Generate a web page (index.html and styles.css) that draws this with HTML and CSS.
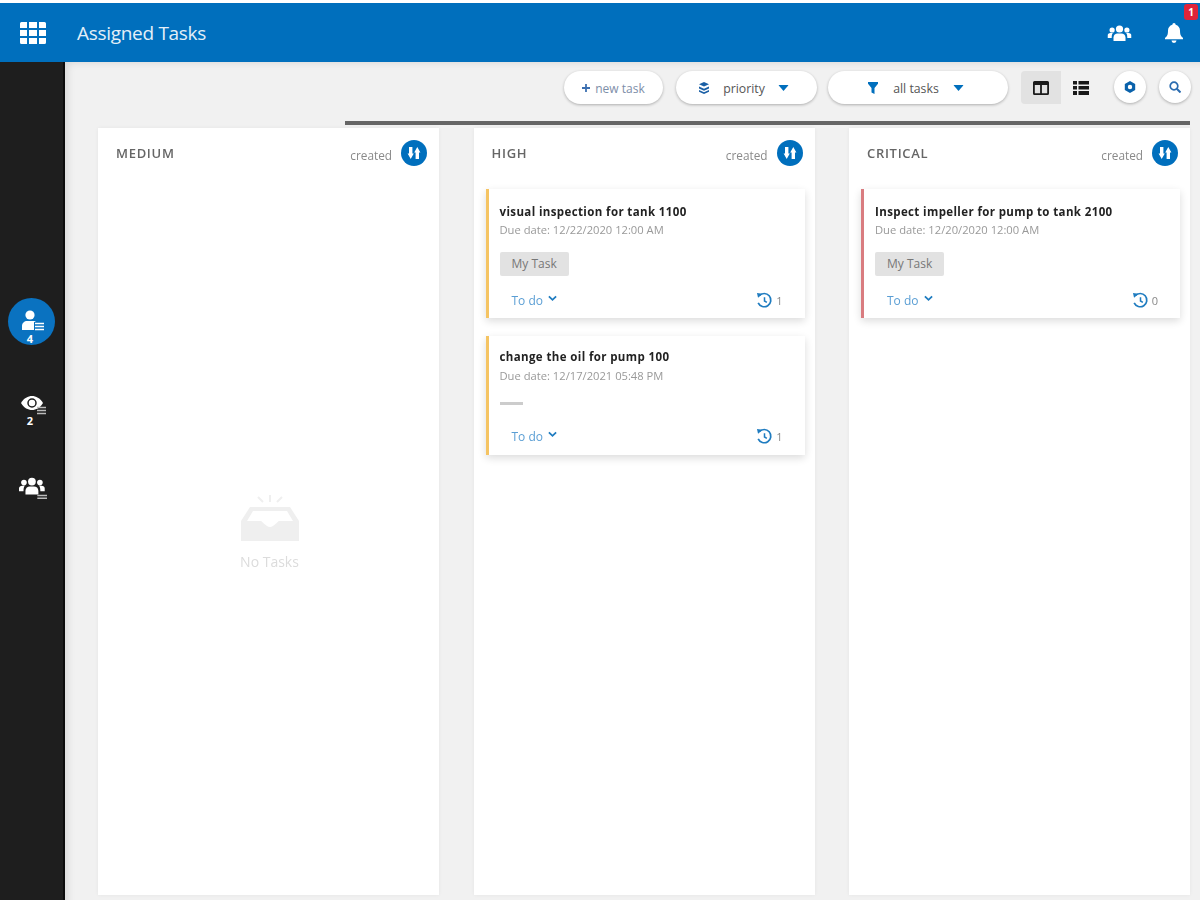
FILE: index.html
```
<!DOCTYPE html>
<html lang="en">
<head>
<meta charset="utf-8">
<title>Assigned Tasks</title>
<link rel="stylesheet" href="styles.css">
</head>
<body>
<svg class="defs" width="0" height="0" aria-hidden="true">
  <defs>
    <symbol id="i-users" viewBox="0 0 24 18">
      <circle cx="12" cy="5" r="3.6"/><circle cx="4.6" cy="6" r="2.6"/><circle cx="19.4" cy="6" r="2.6"/>
      <path d="M6 17v-3.5C6 11 8 9.6 10 9.6h4c2 0 4 1.4 4 3.9V17z"/>
      <path d="M0 14v-2.5C0 10 1.4 9 3 9h2.4C4.6 10 4.2 11.200 4.200 13.500V14z"/>
      <path d="M24 14v-2.500C24 10 22.600 9 21 9h-2.400c.8 1 1.200 2.200 1.200 4.500V14z"/>
    </symbol>
    <symbol id="i-sort" viewBox="0 0 26 26">
      <circle cx="13" cy="13" r="13" fill="#006fbd"/>
      <path fill="#fff" d="M8 7h3.400v6.500h1.400L9.700 19 6.600 13.500H8zM16.300 7l3.100 5.500H18V19h-3.400v-6.500h-1.400z"/>
    </symbol>
    <symbol id="i-history" viewBox="0 0 18 18">
      <path fill="none" stroke="#1f7cc0" stroke-width="1.800" d="M3.400 4A7 7 0 1 1 2.300 11.500"/>
      <path fill="#1f7cc0" d="M1 1l6 .8-4.800 4.400z"/>
      <path fill="none" stroke="#1f7cc0" stroke-width="1.600" d="M9 5.500V9.500l2.500 1.500"/>
    </symbol>
    <symbol id="i-chev" viewBox="0 0 10 7">
      <path fill="none" stroke="#1f7cc0" stroke-width="2" d="M1 1.200l4 3.800 4-3.800"/>
    </symbol>
    <symbol id="i-caret" viewBox="0 0 12 7">
      <path fill="#006fbd" d="M0 0h12L6 7z"/>
    </symbol>
  </defs>
</svg>
<div class="app">
  <header class="topbar">
    <svg class="grid-icon" viewBox="0 0 26 22" aria-hidden="true">
      <path fill="#fff" d="M0 1.500A1.500 1.500 0 0 1 1.500 0H7v6H0zM9 0h8v6H9zM19 0h5.500A1.500 1.500 0 0 1 26 1.500V6h-7zM0 8h7v6H0zM9 8h8v6H9zM19 8h7v6h-7zM0 16h7v6H1.500A1.500 1.500 0 0 1 0 20.500zM9 16h8v6H9zM19 16h7v4.500a1.500 1.500 0 0 1-1.500 1.500H19z"/>
    </svg>
    <h1 class="title">Assigned Tasks</h1>
    <div class="top-actions">
      <svg class="top-users" viewBox="0 0 24 18" aria-hidden="true"><use href="#i-users"/></svg>
      <div class="bell-wrap">
        <svg class="bell" viewBox="0 0 18 20" aria-hidden="true">
          <path fill="#fff" d="M9 0a1.600 1.600 0 0 1 1.600 1.700C13.400 2.400 15 4.800 15 7.500c0 4.500 1 5.800 3 7.500v1.200H0V15c2-1.700 3-3 3-7.500C3 4.800 4.600 2.400 7.400 1.700A1.600 1.600 0 0 1 9 0zM6.500 17.500h5a2.500 2.500 0 0 1-5 0z"/>
        </svg>
        <span class="badge">1</span>
      </div>
    </div>
  </header>
  <div class="body-row">
    <nav class="sidebar">
      <div class="nav-item nav-active">
        <svg class="nav-icon" viewBox="0 0 24 22" aria-hidden="true">
          <circle cx="10" cy="5" r="4.600" fill="#fff"/>
          <path fill="#fff" d="M2 20v-4c0-3 2.500-5 5-5h6c1.500 0 2.500.5 3 1h-2v8z"/>
          <path stroke="#fff" stroke-width="1.500" d="M15 13.500h9M15 16.500h9M15 19.500h9"/>
        </svg>
        <span class="nav-count">4</span>
      </div>
      <div class="nav-item nav-eye">
        <svg class="nav-icon" viewBox="0 0 26 22" aria-hidden="true">
          <path fill="#fff" d="M0 8C3 3 7 1 11 1s8 2 11 7c-3 5-7 7-11 7S3 13 0 8z"/>
          <circle cx="11" cy="8" r="4" fill="none" stroke="#1e1e1e" stroke-width="1.500"/>
          <path stroke="#bbb" stroke-width="1.500" d="M16 12.500h9M16 15.500h9M16 18.500h9"/>
        </svg>
        <span class="nav-count">2</span>
      </div>
      <div class="nav-item nav-team">
        <svg class="nav-icon" viewBox="0 0 26 22" aria-hidden="true">
          <use href="#i-users" width="24" height="18"/>
          <path stroke="#bbb" stroke-width="1.300" d="M17 18h9M17 20.500h9"/>
        </svg>
      </div>
    </nav>
    <main class="main">
      <div class="toolbar">
        <button class="pill pill-new" type="button">
          <svg class="plus" viewBox="0 0 9 9" aria-hidden="true"><path fill="#3b6fb0" d="M3.500 0h2v3.500H9v2H5.500V9h-2V5.500H0v-2h3.500z"/></svg>
          <span>new task</span>
        </button>
        <button class="pill pill-priority" type="button">
          <svg class="pill-icon" viewBox="0 0 12 12" aria-hidden="true"><path fill="#1a5fa5" d="M6 0l5 2.200L6 4.400 1 2.200zM1 4.500l5 2.200 5-2.200v2L6 8.700 1 6.500zM1 8l5 2.200L11 8v1.800L6 12 1 9.800z"/></svg>
          <span>priority</span>
          <svg class="caret" viewBox="0 0 12 7" aria-hidden="true"><use href="#i-caret"/></svg>
        </button>
        <button class="pill pill-all" type="button">
          <svg class="pill-icon" viewBox="0 0 12 12" aria-hidden="true"><path fill="#006fbd" d="M1 0h10v1.800L7.500 6v6l-3-1.500V6L1 1.800z"/></svg>
          <span>all tasks</span>
          <svg class="caret" viewBox="0 0 12 7" aria-hidden="true"><use href="#i-caret"/></svg>
        </button>
        <div class="view-toggle">
          <div class="view-btn view-on">
            <svg class="view-icon" viewBox="0 0 16 14" aria-hidden="true"><path fill="#1a1a1a" d="M1.500 0h13A1.500 1.500 0 0 1 16 1.500v11a1.500 1.500 0 0 1-1.500 1.500h-13A1.500 1.500 0 0 1 0 12.500v-11A1.500 1.500 0 0 1 1.500 0zM1.800 4v8.200h5.300V4zm7.100 0v8.200h5.300V4z" fill-rule="evenodd"/></svg>
          </div>
          <div class="view-btn">
            <svg class="view-icon" viewBox="0 0 16 14" aria-hidden="true"><path fill="#1a1a1a" d="M0 0h4v3.500H0zM5.500 0H16v3.500H5.500zM0 5h4v3.500H0zM5.500 5H16v3.500H5.500zM0 10h4v4H0zM5.500 10H16v4H5.500z"/></svg>
          </div>
        </div>
        <button class="round" type="button">
          <svg class="round-icon" viewBox="0 0 12 12" aria-hidden="true"><path fill="#0a62ab" fill-rule="evenodd" d="M6 0l5.200 3v6L6 12 .8 9V3zM6 3.800a2.200 2.200 0 1 0 0 4.400 2.200 2.200 0 0 0 0-4.400z"/></svg>
        </button>
        <button class="round" type="button">
          <svg class="round-icon" viewBox="0 0 12 12" aria-hidden="true"><circle cx="5" cy="5" r="3.800" fill="none" stroke="#2b6cb0" stroke-width="1.700"/><path stroke="#2b6cb0" stroke-width="2" d="M7.800 7.800L11.500 11.500"/></svg>
        </button>
      </div>
      <div class="progress"></div>
      <section class="board">
        <article class="col">
          <div class="col-head">
            <h2 class="col-title">MEDIUM</h2>
            <span class="sort-label">created</span>
            <svg class="sort" aria-hidden="true"><use href="#i-sort"/></svg>
          </div>
          <div class="empty">
            <svg class="empty-icon" viewBox="0 0 58 46" aria-hidden="true">
              <path fill="#efefef" d="M9 12h40l9 14v20H0V26zM6 26h14c1 0 5 6 9 6s8-6 9-6h14l-6-10H12z" fill-rule="evenodd"/>
              <path stroke="#efefef" stroke-width="2" d="M17 2l5 5M29 0v7M41 2l-5 5"/>
            </svg>
            <p class="empty-text">No Tasks</p>
          </div>
        </article>
        <article class="col">
          <div class="col-head">
            <h2 class="col-title">HIGH</h2>
            <span class="sort-label">created</span>
            <svg class="sort" aria-hidden="true"><use href="#i-sort"/></svg>
          </div>
          <div class="card card-high">
            <h3 class="card-title">visual inspection for tank 1100</h3>
            <p class="card-due">Due date: 12/22/2020 12:00 AM</p>
            <div class="tag-row"><span class="tag">My Task</span></div>
            <div class="card-foot">
              <span class="status">To do</span>
              <svg class="chev" aria-hidden="true"><use href="#i-chev"/></svg>
              <svg class="hist" aria-hidden="true"><use href="#i-history"/></svg>
              <span class="count">1</span>
            </div>
          </div>
          <div class="card card-high">
            <h3 class="card-title">change the oil for pump 100</h3>
            <p class="card-due">Due date: 12/17/2021 05:48 PM</p>
            <div class="tag-row"><span class="dash"></span></div>
            <div class="card-foot">
              <span class="status">To do</span>
              <svg class="chev" aria-hidden="true"><use href="#i-chev"/></svg>
              <svg class="hist" aria-hidden="true"><use href="#i-history"/></svg>
              <span class="count">1</span>
            </div>
          </div>
        </article>
        <article class="col">
          <div class="col-head">
            <h2 class="col-title">CRITICAL</h2>
            <span class="sort-label">created</span>
            <svg class="sort" aria-hidden="true"><use href="#i-sort"/></svg>
          </div>
          <div class="card card-critical">
            <h3 class="card-title">Inspect impeller for pump to tank 2100</h3>
            <p class="card-due">Due date: 12/20/2020 12:00 AM</p>
            <div class="tag-row"><span class="tag">My Task</span></div>
            <div class="card-foot">
              <span class="status">To do</span>
              <svg class="chev" aria-hidden="true"><use href="#i-chev"/></svg>
              <svg class="hist" aria-hidden="true"><use href="#i-history"/></svg>
              <span class="count">0</span>
            </div>
          </div>
        </article>
      </section>
    </main>
  </div>
</div>
</body>
</html>
```
FILE: styles.css
```
* { box-sizing: border-box; }
html, body { margin: 0; height: 100%; background: #f1f1f1; overflow: hidden; }
body { font-family: "Open Sans", "Liberation Sans", sans-serif; color: #222; }
.defs { display: block; height: 0; width: 0; }
.defs, .app { flex: none; }
h1, h2, h3, p { margin: 0; font-weight: 400; }
button { font-family: inherit; border: 0; padding: 0; cursor: pointer; }

.app { height: 900px; display: flex; flex-direction: column; padding-top: 3px; background: #fff; filter: blur(0.7px); }
.topbar { height: 59px; flex: none; background: #006fbd; display: flex; align-items: center; padding: 0 17px 0 20px; color: #fff; }
.grid-icon { width: 26px; height: 22px; flex: none; }
.title { font-size: 19px; margin-left: 31px; letter-spacing: -0.3px; color: #e4eff8; font-weight: 400; }
.top-actions { margin-left: auto; display: flex; align-items: center; gap: 33px; }
.top-users { width: 25px; height: 18px; fill: #fff; }
.bell-wrap { position: relative; width: 18px; height: 20px; }
.bell { width: 18px; height: 20px; display: block; }
.badge { position: absolute; top: -19px; right: -15px; width: 14px; height: 16px; background: #e0243a; border-radius: 3px; color: #fff; font-size: 10px; font-weight: 700; text-align: center; line-height: 16px; }

.body-row { flex: 1; display: flex; min-height: 0; }
.sidebar { width: 65px; flex: none; background: #1e1e1e; border-right: 2px solid #0c0c0c; display: flex; flex-direction: column; align-items: center; padding: 236px 0 0 0; }
.nav-item { display: flex; flex-direction: column; align-items: center; color: #fff; }
.nav-active { width: 47px; height: 47px; border-radius: 50%; background: #0a72c0; padding-top: 12px; }
.nav-active .nav-icon { width: 24px; height: 22px; }
.nav-count { font-size: 11px; font-weight: 700; line-height: 10px; margin-top: 2px; margin-right: 3px; }
.nav-eye { margin-top: 50px; }
.nav-eye .nav-icon { width: 26px; height: 22px; margin-left: 4px; }
.nav-eye .nav-count { margin-top: -1px; }
.nav-team { margin-top: 50px; }
.nav-team .nav-icon { width: 28px; height: 24px; fill: #fff; margin-left: 3px; }

.main { flex: 1; min-width: 0; display: flex; flex-direction: column; background: #f1f1f1; box-shadow: inset 8px 6px 8px -6px rgba(0,0,0,.12); padding-right: 10px; }
.toolbar { height: 59px; flex: none; display: flex; align-items: flex-start; padding-top: 9px; justify-content: flex-end; }
.pill { height: 33px; border-radius: 17px; background: #fff; box-shadow: 0 1px 3px rgba(0,0,0,.28); display: flex; align-items: center; justify-content: center; font-size: 12.300px; color: #555; }
.pill span { position: relative; top: 1px; }
.pill-new { width: 99px; margin-right: 13px; color: #7d8ea8; gap: 5px; font-size: 12px; padding-right: 0; }
.pill-priority { width: 141px; margin-right: 11px; gap: 13px; padding-right: 6px; }
.pill-all { width: 180px; margin-right: 13px; gap: 14px; padding-right: 5px; }
.plus { width: 8px; height: 8px; }
.pill-icon { width: 12px; height: 12px; }
.caret { width: 11px; height: 6px; }
.view-toggle { display: flex; margin-right: 13px; }
.view-btn { width: 40px; height: 33px; display: flex; align-items: center; justify-content: center; }
.view-on { background: #e2e2e2; border-radius: 4px 0 0 4px; }
.view-icon { width: 16px; height: 14px; }
.round { width: 32px; height: 32px; border-radius: 50%; background: #fff; box-shadow: 0 1px 3px rgba(0,0,0,.28); display: flex; align-items: center; justify-content: center; margin-right: 13px; }
.round:last-child { margin-right: -1px; }
.round-icon { width: 12px; height: 12px; }

.progress { height: 4px; flex: none; margin-left: 280px; background: #666; }
.board { flex: 1; min-height: 0; display: grid; grid-template-columns: repeat(3, 341px); column-gap: 34.500px; padding: 3px 0 5px 33px; }
.col { background: #fff; padding: 0 10px 0 12px; box-shadow: 0 0 4px rgba(0,0,0,.05); display: flex; flex-direction: column; }
.col-head { height: 61px; flex: none; display: flex; align-items: flex-start; padding: 12px 2px 0 6px; }
.col-title { font-size: 13px; font-weight: 600; color: #666; line-height: 26px; margin-top: 0; letter-spacing: .7px; }
.sort-label { margin-left: auto; font-size: 11.800px; color: #8a8a8a; line-height: 14px; margin-top: 8px; }
.sort { width: 26px; height: 26px; margin-left: 9px; }

.card { background: #fff; border-left: 3px solid #f5c463; box-shadow: 0 3px 8px rgba(0,0,0,.14); height: 129px; padding: 15px 11px 0 11px; margin-bottom: 18px; display: flex; flex-direction: column; }
.card + .card { height: 119px; padding-top: 13px; }
.card-critical { border-left-color: #d97c80; }
.card-title { font-size: 11.500px; font-weight: 700; color: #222; line-height: 16px; letter-spacing: .38px; white-space: nowrap; }
.card-due { font-size: 11.200px; color: #999; line-height: 15px; margin-top: 2px; white-space: nowrap; }
.card + .card .card-due { margin-top: 3px; }
.tag-row { height: 38px; margin-top: 7px; display: flex; align-items: center; flex: none; }
.card + .card .tag-row { height: 28px; margin-top: 6px; }
.tag { background: #e2e2e2; color: #777; font-size: 12px; height: 24px; line-height: 24px; padding: 0 12px; border-radius: 2px; position: relative; top: 1px; }
.dash { width: 23px; height: 3px; background: #ccc; }
.card-foot { display: flex; align-items: center; padding: 0 11px 0 12px; height: 24px; margin-top: 6px; }
.card + .card .card-foot { margin-top: 7px; }
.status { font-size: 12px; color: #5a9ed4; }
.chev { width: 9px; height: 7px; margin-left: 5px; margin-top: -3px; }
.hist { width: 17px; height: 17px; margin-left: auto; margin-right: -2px; }
.count { font-size: 11px; color: #888; margin-left: 5px; }

.empty { flex: 1; display: flex; flex-direction: column; align-items: center; padding-top: 306px; }
.empty-icon { width: 58px; height: 46px; }
.empty-text { font-size: 14px; color: #dcdcdc; margin-top: 11px; }
```
